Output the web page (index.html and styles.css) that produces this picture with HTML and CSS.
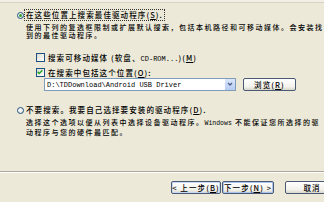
FILE: index.html
```html
<!DOCTYPE html>
<html>
<head>
<meta charset="utf-8">
<link rel="stylesheet" href="styles.css">
</head>
<body>
<div class="dlg">
  <div class="topband"></div>
  <div class="content">
    <div class="opt first">
      <span class="radio on"></span>
      <span class="label focus">在这些位置上搜索最佳驱动程序(<u>S</u>).</span>
    </div>
    <div class="desc">
      <div class="line">使用下列的复选框限制或扩展默认搜索，包括本机路径和可移动媒体。会安装找</div>
      <div class="line">到的最佳驱动程序。</div>
    </div>
    <div class="chk first">
      <span class="box"></span>
      <span class="label">搜索可移动媒体 (软盘、<span class="mono">CD-ROM...</span>)(<u>M</u>)</span>
    </div>
    <div class="chk">
      <span class="box on"><svg viewBox="0 0 8 8" width="8" height="8"><path d="M1.6 3.8 L3.2 5.4 L6.4 2.2" fill="none" stroke="#21a121" stroke-width="1.4"/></svg></span>
      <span class="label">在搜索中包括这个位置(<u>O</u>):</span>
    </div>
    <div class="pathrow">
      <div class="combo">
        <span class="val mono">D:\TDDownload\Android USB Driver</span>
        <span class="arrow"><svg viewBox="0 0 10 11" width="10" height="11"><path d="M3 4 L5 6 L7 4" fill="none" stroke="#4d6185" stroke-width="1.3"/></svg></span>
      </div>
      <span class="btn browse">浏览(<u>R</u>)</span>
    </div>
    <div class="opt second">
      <span class="radio"></span>
      <span class="label">不要搜索。我要自己选择要安装的驱动程序(<u>D</u>).</span>
    </div>
    <div class="desc">
      <div class="line">选择这个选项以便从列表中选择设备驱动程序。<span class="mono">Windows</span> 不能保证您所选择的驱</div>
      <div class="line">动程序与您的硬件最匹配。</div>
    </div>
  </div>
  <div class="sep"></div>
  <div class="footer">
    <span class="btn back">&lt; 上一步(<u>B</u>)</span>
    <span class="btn next">下一步(<u>N</u>) &gt;</span>
    <span class="btn cancel">取消</span>
  </div>
</div>
</body>
</html>
```

FILE: styles.css
```css
html, body {
  margin: 0;
  padding: 0;
  background: #ece9d8;
  overflow: hidden;
}
.dlg {
  width: 324px;
  height: 202px;
  overflow: hidden;
  font-family: "Noto Sans CJK SC", sans-serif;
  font-size: 7.5px;
  font-weight: 500;
  letter-spacing: 1.1px;
  color: #000;
  background: #ece9d8;
}
.topband {
  height: 2px;
  background: #f2f0e6;
  border-bottom: 1px solid #d8d4c4;
}
.content {
  padding-left: 17px;
}
.mono {
  font-family: "Liberation Mono", monospace;
  font-size: 7px;
  font-weight: 400;
  letter-spacing: 0;
}
u { text-decoration: underline; }
.opt {
  display: flex;
  align-items: center;
  height: 12px;
}
.opt.first { margin-top: 6px; }
.opt.second { margin-top: 13px; }
.radio {
  width: 5px;
  height: 5px;
  border: 1px solid #1c5180;
  border-radius: 50%;
  background: radial-gradient(circle at 35% 35%, #ffffff, #dcdcd4);
  display: flex;
  align-items: center;
  justify-content: center;
  flex: none;
}
.radio.on::after {
  content: "";
  width: 3px;
  height: 3px;
  border-radius: 50%;
  background: #2fa02f;
}
.opt .label {
  margin-left: 1px;
  line-height: 10px;
  padding: 0 1px;
  white-space: nowrap;
}
.focus {
  outline: 1px dotted #333;
  outline-offset: 0;
}
.desc {
  margin-top: 2px;
  padding-left: 9px;
  font-size: 7px;
  line-height: 8px;
  letter-spacing: 1.5px;
  white-space: nowrap;
}
.desc .mono { font-size: 6.5px; letter-spacing: 0; }
.chk {
  display: flex;
  align-items: center;
  height: 10px;
  padding-left: 19px;
}
.chk.first { margin-top: 13px; }
.chk + .chk { margin-top: 5px; }
.box {
  width: 7px;
  height: 7px;
  border: 1px solid #1c5180;
  background: linear-gradient(135deg, #dcdcd4, #ffffff);
  display: flex;
  flex: none;
}
.box svg { margin: -1px 0 0 -1px; }
.chk .label {
  margin-left: 3px;
  white-space: nowrap;
}
.pathrow {
  display: flex;
  align-items: center;
  margin-top: 1px;
  padding-left: 27px;
  height: 13px;
}
.combo {
  width: 190px;
  height: 11px;
  border: 1px solid #7f9db9;
  background: #fff;
  display: flex;
  align-items: center;
}
.combo .val {
  flex: 1;
  padding-left: 2px;
  white-space: nowrap;
  overflow: hidden;
}
.combo .arrow {
  width: 10px;
  height: 11px;
  background: linear-gradient(#dbe6fb, #b7cbf3);
  border-left: 1px solid #fff;
  display: flex;
}
.btn {
  display: flex;
  align-items: center;
  justify-content: center;
  height: 11px;
  border: 1px solid #4a5a74;
  border-radius: 2px;
  background: linear-gradient(#ffffff, #f3f2ec 70%, #d9d6c9);
  white-space: nowrap;
  flex: none;
}
.browse {
  width: 51px;
  margin-left: 7px;
}
.sep {
  margin-top: 35px;
  height: 1px;
  background: #aca899;
  border-bottom: 1px solid #fff;
}
.footer {
  display: flex;
  margin-top: 8px;
  padding-left: 171px;
}
.back { width: 48px; box-shadow: inset 0 0 0 1px #c8d8f4; }
.next { width: 50px; margin-left: 1px; box-shadow: inset 0 0 0 1px #aac4ef; }
.cancel { width: 52px; margin-left: 11px; }
```
